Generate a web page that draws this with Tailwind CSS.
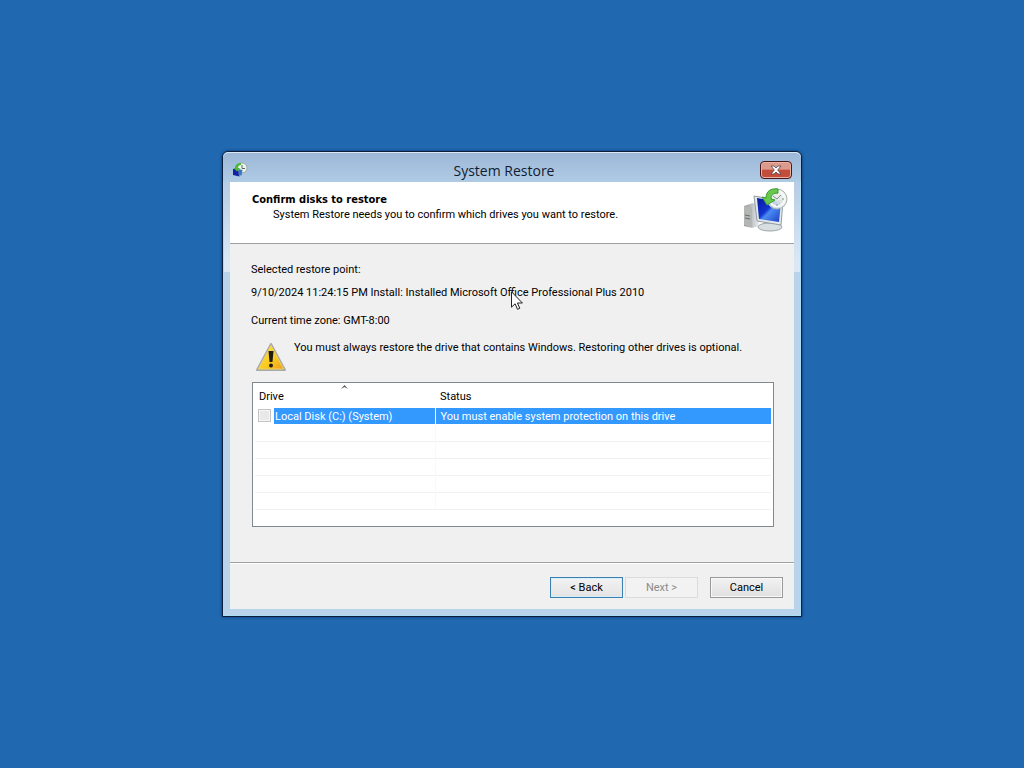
<!DOCTYPE html>
<html lang="en">
<head>
    <meta charset="UTF-8">
    <meta name="viewport" content="width=device-width, initial-scale=1.0">
    <title>System Restore</title>
    <script src="https://cdn.jsdelivr.net/npm/@tailwindcss/browser@4"></script>
</head>
<body class="min-h-screen flex items-center justify-center bg-[#2068b0] font-['Roboto','Noto_Sans',sans-serif] text-[11px] leading-4 text-black">

    <!-- Window -->
    <div class="relative w-full max-w-[580px] rounded-t-md border border-[#0c1f3d] bg-[linear-gradient(to_bottom,#b5cce5_30px,#dae8f6_110px,#dae8f6_120px,#b9d3eb_120px)] shadow-[inset_0_0_0_1px_#a9dcf5,0_0_3px_#0c2f66]">
        <!-- Title bar -->
        <div class="flex items-center h-[30px] px-[9px] pt-1 rounded-t-md border-t border-[#dbe9f6] bg-linear-to-b from-[#9db7d8] to-[#b0cbe4]">
            <svg class="size-4" viewBox="0 0 16 16" aria-hidden="true">
                <circle cx="10" cy="6" r="5" fill="#eef3ec" stroke="#9aaaa5"/>
                <path d="M10 3v3.500h3" fill="none" stroke="#4d6b62"/>
                <path d="M1 7l5-.5 1.500 8L1 13z" fill="#1520a0"/>
                <path d="M6.500 7l4 1-1 5.500-3-.5z" fill="#3c75c4"/>
                <path d="M9 1C5 1 3 3 3 6L1.500 6 5 9.500 8 6H6c0-2 1-3 3-3z" fill="#49b83b"/>
            </svg>
            <h1 class="flex-1 pt-0.5 text-center text-[14px] leading-5 text-[#101c30] font-['Open_Sans','Noto_Sans',sans-serif]">System Restore</h1>
            <button type="button" aria-label="Close" class="flex items-center justify-center w-8 h-[18px] rounded-sm border border-[#4a1718] bg-linear-to-b from-[#dc9a8c] from-45% to-[#c44c3a] to-50% shadow-[inset_0_0_0_1px_#e9b0a4]">
                <svg class="w-3 h-[10px]" viewBox="0 0 12 10" aria-hidden="true">
                    <path d="M1 1h3l2 2 2-2h3L7.700 5 11 9H8L6 7 4 9H1l3.300-4z" fill="#fff" stroke="#53424a" stroke-width=".8"/>
                </svg>
            </button>
        </div>

        <div class="mx-[7px] mb-[7px] bg-[#f0f0f0]">
            <!-- Page heading -->
            <header class="flex justify-between h-[62px] pl-[22px] pr-1.5 pt-[5px] bg-white border-b border-[#a0a0a0]">
                <div class="pt-[5px]">
                    <h2 class="font-bold font-['DejaVu_Sans_Condensed','Noto_Sans',sans-serif]">Confirm disks to restore</h2>
                    <p class="pl-[21px] -mt-px">System Restore needs you to confirm which drives you want to restore.</p>
                </div>
                <svg class="w-[46px] h-[46px]" viewBox="0 0 46 46" aria-hidden="true">
                    <defs>
                        <linearGradient id="screen" x1="0" y1="0" x2="1" y2="1">
                            <stop offset="0" stop-color="#0716a0"/>
                            <stop offset=".45" stop-color="#1236cf"/>
                            <stop offset=".55" stop-color="#4a8cf0"/>
                            <stop offset="1" stop-color="#1b3bc8"/>
                        </linearGradient>
                        <linearGradient id="metal" x1="0" y1="0" x2="1" y2="0">
                            <stop offset="0" stop-color="#8d9296"/>
                            <stop offset="1" stop-color="#eceeee"/>
                        </linearGradient>
                    </defs>
                    <path d="M2 19l9-3 6 2v21l-7 2-8-2z" fill="url(#metal)"/>
                    <path d="M2 19l8 1v20l-8-2z" fill="#b4b6b4"/>
                    <path d="M3 28l5 1M3 31l5 1" stroke="#666c70"/>
                    <path d="M22 35l11 1 2 4H21z" fill="#b5bdc1"/>
                    <ellipse cx="28" cy="40" rx="12" ry="4" fill="#d9dfe1" stroke="#9da6aa"/>
                    <path d="M12 9l29 5-2 24-24-4z" fill="#e2e8eb" stroke="#919da5"/>
                    <path d="M15 11l24 4-2 20-20-3z" fill="url(#screen)"/>
                    <circle cx="35" cy="12" r="10" fill="#e5eae6" fill-opacity=".85" stroke="#aab5b2"/>
                    <circle cx="35" cy="12" r="7.500" fill="none" stroke="#f8faf8" stroke-width="2"/>
                    <path d="M35 5v2M35 17v2M28 12h2M40 12h2M35 12l4-4M35 12l-4-3" stroke="#82908f" fill="none"/>
                    <path d="M36 2C29 1 24 4 24 11l-4-1 5 8 8-5-4-1c0-4 2-6 7-6z" fill="#68c94d" stroke="#3d9a33"/>
                </svg>
            </header>

            <main class="px-[21px] pt-[18px] pb-[35px] border-b border-[#a0a0a0]">
                <p>Selected restore point:</p>
                <p class="mt-[7px]">9/10/2024 11:24:15 PM Install: Installed Microsoft Office Professional Plus 2010</p>
                <p class="mt-3">Current time zone: GMT-8:00</p>

                <div class="flex gap-[7px] pt-[11px] pl-1">
                    <svg class="w-8 h-8" viewBox="0 0 32 32" aria-hidden="true">
                        <defs>
                            <linearGradient id="warn" x1="0" y1="0" x2="1" y2="1">
                                <stop offset="0" stop-color="#ffe65a"/>
                                <stop offset=".6" stop-color="#fbc81c"/>
                                <stop offset="1" stop-color="#ee9a20"/>
                            </linearGradient>
                        </defs>
                        <path d="M16 4L2 30h28z" fill="url(#warn)" stroke="#a9a9a5" stroke-width="2" stroke-linejoin="round"/>
                        <path d="M16 5.500L3.500 29h25z" fill="url(#warn)" stroke="#f3d45a"/>
                        <path d="M13.500 11h5l-1 11h-3z" fill="#1d1c12"/>
                        <circle cx="16" cy="25.500" r="2" fill="#1d1c12"/>
                    </svg>
                    <p>You must always restore the drive that contains Windows. Restoring other drives is optional.</p>
                </div>

                <!-- Drive list -->
                <div class="relative mt-[10px] ml-px mr-[-1px] h-[145px] border border-[#828790] bg-white px-0.5">
                    <svg class="absolute left-[88px] top-0.5 w-[7px] h-1" viewBox="0 0 7 4" aria-hidden="true">
                        <path d="M0 4l3.500-4L7 4 3.500 2z" fill="#555"/>
                    </svg>
                    <table class="w-full table-fixed border-collapse text-left">
                        <thead>
                            <tr class="h-6">
                                <th class="w-[180px] p-0 pt-[3px] pl-1 font-normal">Drive</th>
                                <th class="p-0 pt-[3px] pl-[5px] font-normal">Status</th>
                            </tr>
                        </thead>
                        <tbody>
                            <tr class="h-[17px]">
                                <td class="p-0 border-r border-white">
                                    <div class="flex items-center h-4">
                                        <input type="checkbox" id="drive-c" disabled class="appearance-none ml-[3px] size-[13px] border border-[#c3c3c3] bg-[#e9e9e9] shadow-[inset_0_0_0_1px_#f6f6f6]">
                                        <label for="drive-c" class="flex-1 h-4 ml-[3px] pl-px bg-[#3399ff] text-white leading-[18px]">Local Disk (C:) (System)</label>
                                    </div>
                                </td>
                                <td class="p-0">
                                    <div class="h-4 pl-[5px] bg-[#3399ff] text-white leading-[18px]">You must enable system protection on this drive</div>
                                </td>
                            </tr>
                            <tr class="h-[17px] border-b border-[#f0f0f0]"><td class="border-r border-[#f8f8f8]"></td><td></td></tr>
                            <tr class="h-[17px] border-b border-[#f0f0f0]"><td class="border-r border-[#f8f8f8]"></td><td></td></tr>
                            <tr class="h-[17px] border-b border-[#f0f0f0]"><td class="border-r border-[#f8f8f8]"></td><td></td></tr>
                            <tr class="h-[17px] border-b border-[#f0f0f0]"><td class="border-r border-[#f8f8f8]"></td><td></td></tr>
                            <tr class="h-[17px] border-b border-[#f0f0f0]"><td class="border-r border-[#f8f8f8]"></td><td></td></tr>
                        </tbody>
                    </table>
                </div>
            </main>

            <footer class="flex justify-end pt-[13px] pb-[11px] pr-[11px] border-t border-white">
                <button type="button" class="w-[73px] h-[21px] pt-px border border-[#3c7fb1] bg-linear-to-b from-[#f2f2f2] to-[#e4e4e4] shadow-[inset_0_0_0_1px_#d4eefa]">&lt; Back</button>
                <button type="button" disabled class="ml-0.5 w-[73px] h-[21px] pt-px border border-[#dcdcdc] bg-[#f2f2f2] text-[#8b8b8b]">Next &gt;</button>
                <button type="button" class="ml-3 w-[73px] h-[21px] pt-px border border-[#9a9a9a] bg-linear-to-b from-[#f2f2f2] to-[#e0e0e0] shadow-[inset_0_0_0_1px_#f8f8f8]">Cancel</button>
            </footer>
        </div>

        <!-- Mouse pointer -->
        <svg class="absolute left-[288px] top-[139px] w-3 h-[19px]" viewBox="0 0 12 19" aria-hidden="true">
            <path d="M.5.8v15.400l3.600-3.400 2.400 5.500 2.300-1-2.400-5.300h5z" fill="#fff" stroke="#222"/>
        </svg>
    </div>

</body>
</html>
